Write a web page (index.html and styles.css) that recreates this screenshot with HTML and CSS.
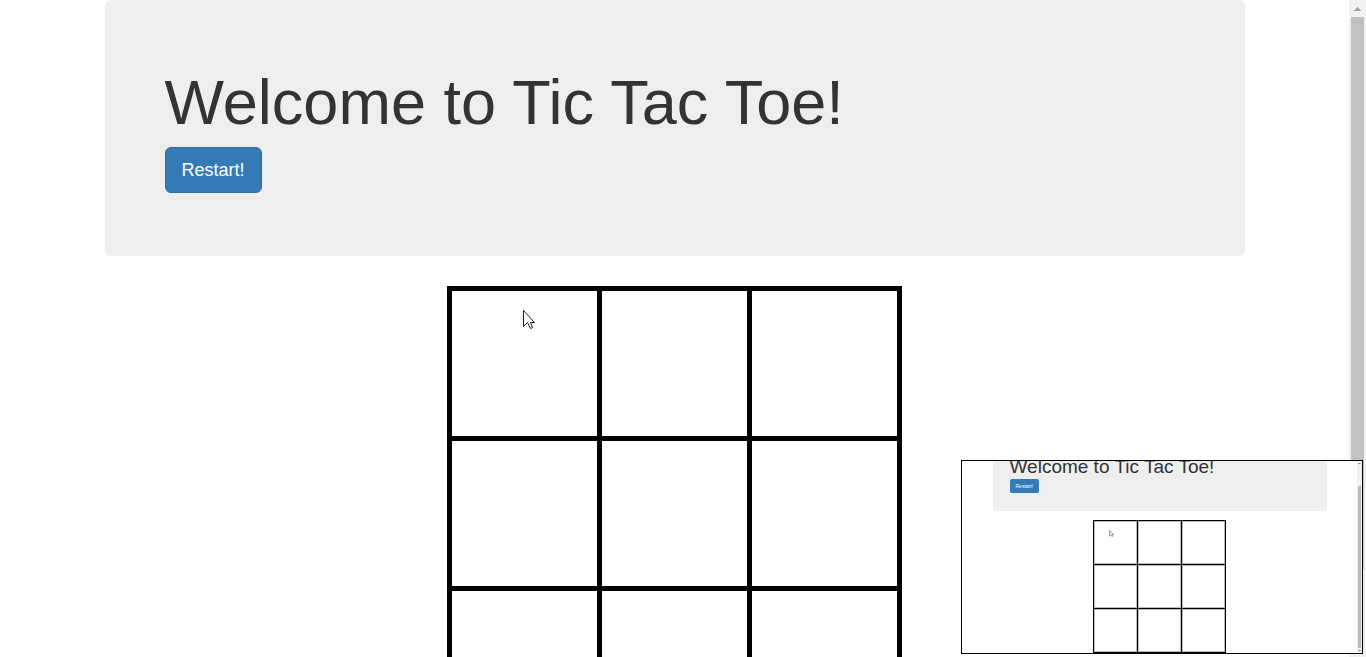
FILE: index.html
```html
<!DOCTYPE html>
<html lang="en">
<head>
<meta charset="utf-8">
<meta name="viewport" content="width=device-width, initial-scale=1">
<title>Tic Tac Toe</title>
<link rel="stylesheet" href="styles.css">
</head>
<body>
<div class="window">
  <main class="page">
    <div class="container">
      <header class="jumbotron">
        <h1 class="title">Welcome to Tic Tac Toe!</h1>
        <button class="restart" type="button">Restart!</button>
      </header>
      <table class="board">
        <tr><td></td><td></td><td></td></tr>
        <tr><td></td><td></td><td></td></tr>
        <tr><td></td><td></td><td></td></tr>
      </table>
    </div>
  </main>
  <div class="scrollbar">
    <svg class="scroll-arrow" viewBox="0 0 17 17" shape-rendering="crispEdges"><path d="M8 7h1v1h1v1h1v1h1v1H5v-1h1V9h1V8h1z"/></svg>
    <div class="scroll-thumb"></div>
  </div>
</div>

<svg class="cursor" viewBox="0 0 13 20"><path d="M.5.5v16l4-4 3 6 2-1-2-5h4z"/></svg>

<section class="preview" aria-label="Page preview">
  <div class="preview-page">
    <div class="preview-jumbotron">
      <h2 class="preview-title">Welcome to Tic Tac Toe!</h2>
      <button class="preview-restart" type="button">Restart!</button>
    </div>
    <table class="preview-board">
      <tr><td></td><td></td><td></td></tr>
      <tr><td></td><td></td><td></td></tr>
      <tr><td></td><td></td><td></td></tr>
    </table>
    <svg class="preview-cursor" viewBox="0 0 13 20"><path d="M1 1v16l4-4 3 6 2-1-2-5h4z"/></svg>
  </div>
  <div class="preview-scrollbar">
    <svg class="preview-arrow" viewBox="0 0 5 5"><path d="M1 3h3L3 2H2z"/></svg>
    <div class="preview-thumb"></div>
    <svg class="preview-arrow" viewBox="0 0 5 5"><path d="M1 2h3L3 3H2z"/></svg>
  </div>
</section>
</body>
</html>
```
FILE: styles.css
```css
* {
  box-sizing: border-box;
}

body {
  margin: 0;
  background: #fff;
  color: #333;
  font-family: "Liberation Sans", Arial, sans-serif;
}

.window {
  display: flex;
  height: 100vh;
  overflow: hidden;
}

.page {
  flex: 1;
  overflow: hidden;
}

.container {
  max-width: 1170px;
  margin: 0 auto;
  padding: 0 15px;
}

.jumbotron {
  margin-bottom: 30px;
  padding: 68px 60px 63px;
  border-radius: 6px;
  background: #eee;
}

.title {
  margin: 0 0 10px;
  font-size: 63px;
  font-weight: 500;
  line-height: 69px;
}

.restart {
  display: block;
  padding: 10px 16px;
  border: 1px solid #2e6da4;
  border-radius: 6px;
  background: #337ab7;
  color: #fff;
  font-family: inherit;
  font-size: 18px;
  line-height: 24px;
}

.board {
  margin: 0 auto;
  border-collapse: collapse;
}

.board td {
  width: 150px;
  height: 150px;
  padding: 0;
  border: 5px solid #000;
}

.scrollbar {
  display: flex;
  flex-direction: column;
  width: 17px;
  background: #f1f1f1;
}

.scroll-arrow {
  width: 17px;
  height: 17px;
  fill: #a3a3a3;
}

.scroll-thumb {
  height: 84%;
  margin: 0 2px;
  background: #c1c1c1;
}

.cursor {
  position: absolute;
  top: 310px;
  left: 523px;
  width: 13px;
  height: 20px;
  fill: #fff;
  stroke: #1c1c28;
}

.preview {
  position: fixed;
  right: 3px;
  bottom: 3px;
  display: flex;
  width: 402px;
  height: 194px;
  overflow: hidden;
  border: 1px solid #000;
  background: #fff;
}

.preview-page {
  position: relative;
  display: flex;
  flex: 1;
  flex-direction: column;
  align-items: center;
  justify-content: flex-end;
}

.preview-jumbotron {
  width: 334px;
  margin-bottom: 9px;
  padding: 20px 17px 18px;
  border-radius: 2px;
  background: #eee;
}

.preview-title {
  margin: 0 0 2px;
  font-size: 19px;
  font-weight: 500;
  line-height: 20px;
}

.preview-restart {
  display: block;
  padding: 4px 6px;
  border: 0;
  border-radius: 2px;
  background: #337ab7;
  color: #fff;
  font-family: inherit;
  font-size: 5px;
  line-height: 6px;
}

.preview-board {
  border-collapse: collapse;
}

.preview-board td {
  width: 44px;
  height: 44px;
  padding: 0;
  border: 1px solid #000;
  box-shadow: inset 0 0 0 1px #bbb;
}

.preview-cursor {
  position: absolute;
  top: 69px;
  left: 147px;
  width: 5px;
  height: 7px;
  fill: #fff;
  stroke: #777;
  stroke-width: 2;
}

.preview-scrollbar {
  display: flex;
  flex-direction: column;
  width: 5px;
  background: #f1f1f1;
}

.preview-arrow {
  width: 5px;
  height: 5px;
  fill: #777;
}

.preview-thumb {
  flex: 1;
  margin: 20px 1px 0;
  background: #bbb;
}
```
